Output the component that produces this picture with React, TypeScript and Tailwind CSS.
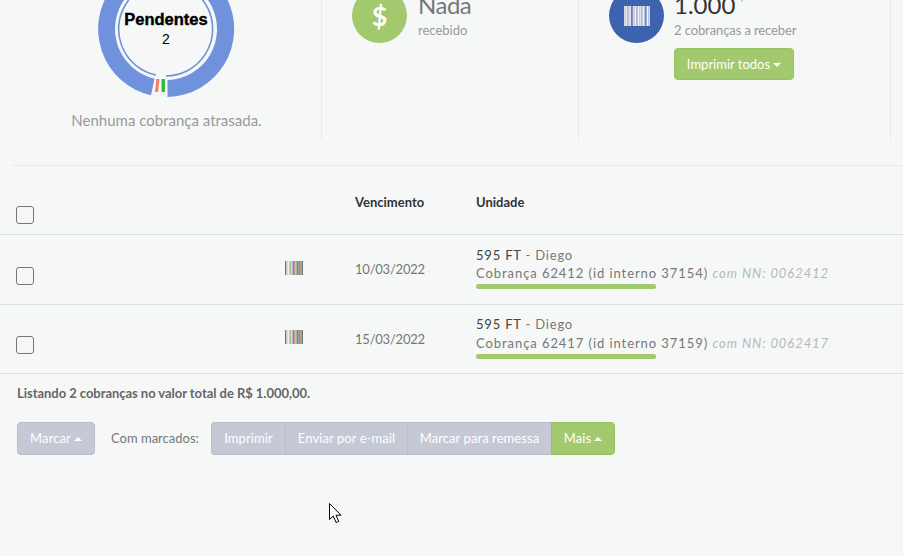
import React from "react";

const lato = "font-['Lato','Noto_Sans',sans-serif]";

function Barcode({ w, h, colors }: { w: number; h: number; colors: string[] }) {
  const bw = w / colors.length;
  return (
    <svg width={w} height={h} viewBox={`0 0 ${w} ${h}`} className="block">
      {colors.map((c, i) => (
        <rect key={i} x={i * bw} y={0} width={bw} height={h} fill={c} />
      ))}
    </svg>
  );
}

const small = ["#8e5aa8", "#d9dbe0", "#eceeea", "#a6b69a", "#e2dcd4", "#7d8d9a", "#c49aa0", "#a8b4a8", "#6f8290", "#7f8f9c", "#e09a4a", "#4f78a8"];
const big = ["#d8dce8", "#eef0f4", "#c6cbdc", "#f4f6f8", "#8e72b8", "#cfd4e2", "#f4f6f8", "#b8c4dc", "#f4f6f8", "#dfe4ee", "#c8d0e0", "#f4f6f8", "#6a8ad0", "#f0f2f6", "#d5dae6"];

function Donut() {
  return (
    <svg width={140} height={140} viewBox="0 0 140 140" className="mr-[1px] block">
      <path d="M 71.5 138 A 68 68 0 1 0 55 136.3 L 58.5 119.7 A 51 51 0 1 1 71.5 121 Z" fill="#7091dc" />
      <path d="M 70 117 A 47 47 0 1 0 60 116" fill="none" stroke="#7091dc" strokeWidth={1.6} />
      <polygon points="60.5,120 63.5,120 62,133 59,133" fill="#f47b5c" />
      <polygon points="65.5,120 69,120 69,133 65.5,133" fill="#2fbe3c" />
      <text x={70} y={66} textAnchor="middle" fontFamily="'Liberation Sans', Arial, sans-serif" fontWeight={700} fontSize={16.5} fill="#000" stroke="#000" strokeWidth={0.4}>
        Pendentes
      </text>
      <text x={70} y={85} textAnchor="middle" fontFamily="'Liberation Sans', Arial, sans-serif" fontSize={14} fill="#000">
        2
      </text>
    </svg>
  );
}

function Caret({ up = false }: { up?: boolean }) {
  return (
    <svg width={8} height={4} viewBox="0 0 8 4" className="ml-[3px] inline-block">
      <polygon points={up ? "0,4 8,4 4,0" : "0,0 8,0 4,4"} fill="#fff" />
    </svg>
  );
}

function Check() {
  return <div className="h-[18px] w-[18px] rounded-[3px] border border-[#777]" />;
}

function Row({ date, cob, id, nn, h, top, check, code, gap }: { date: string; cob: string; id: string; nn: string; h: string; top: string; check: string; code: string; gap: string }) {
  return (
    <div className={`grid grid-cols-[285px_70px_121px_1fr] border-b border-[#dcdfdf] ${h}`}>
      <div className={`pl-4 ${check}`}>
        <Check />
      </div>
      <div className={code}>
        <Barcode w={18} h={14} colors={small} />
      </div>
      <div className="flex items-center pt-[1px] text-[13px] tracking-[-0.22px] text-[#777]">{date}</div>
      <div className={top}>
        <div className="text-[13px] leading-[18px] tracking-[0.8px] text-[#777]">
          <span className="text-[#444]">595 FT</span> - Diego
        </div>
        <div className={`${gap} text-[13px] leading-[18px] tracking-[0.93px] whitespace-nowrap text-[#777]`}>
          Cobrança {cob} (id interno {id}) <em className="text-[#b5b8bb]">com NN: {nn}</em>
        </div>
        <div className="mt-[2px] h-[5px] w-[180px] rounded-[3px] bg-[#a2c96d]" />
      </div>
    </div>
  );
}

export default function App() {
  return (
    <div className={`${lato} relative h-[556px] w-[903px] overflow-hidden bg-[#f6f8f8]`}>
      {/* summary */}
      <div className="-mt-[41px] ml-3 flex h-[181px]">
        <div className="flex w-[310px] flex-col items-center border-r border-[#e8eaea]">
          <Donut />
          <div className="mt-[11px] text-[15px] leading-5 text-[#999]">Nenhuma cobrança atrasada.</div>
        </div>
        <div className="flex w-[257px] gap-[11px] border-r border-[#e8eaea] pl-[30px] pt-[29px]">
          <div className="flex h-[55px] w-[55px] items-center justify-center rounded-full bg-[#a2c96d] text-[27px] font-bold leading-none text-white">$</div>
          <div>
            <div className="h-[30px] text-[24px] leading-[34px] tracking-[-0.5px] text-[#777]">Nada</div>
            <div className="mt-[3px] text-[13px] leading-[18px] text-[#999]">recebido</div>
          </div>
        </div>
        <div className="flex w-[312px] gap-[10px] border-r border-[#e8eaea] pl-[30px] pt-[29px]">
          <div className="flex h-[55px] w-[55px] items-center justify-center rounded-full bg-[#3b63ae]">
            <Barcode w={26} h={20} colors={big} />
          </div>
          <div>
            <div className="h-[30px] text-[24px] leading-[34px] text-[#333]">
              1.000<sup className="ml-[5px] align-[8px] text-[13px] text-[#777]">,00</sup>
            </div>
            <div className="mt-[3px] text-[13px] leading-[18px] tracking-[-0.1px] text-[#999]">2 cobranças a receber</div>
            <button className="mt-[9px] flex h-[32px] w-[120px] items-center justify-center rounded-[4px] border border-[#98c262] bg-[#a2c96d] pt-[1px] text-[13px] text-white">
              Imprimir todos
              <Caret />
            </button>
          </div>
        </div>
      </div>

      <div className="ml-3 mt-[25px] border-t border-[#e8eaea]" />

      {/* header */}
      <div className="grid h-[69px] grid-cols-[285px_70px_121px_1fr] border-b border-[#dcdfdf]">
        <div className="pl-4 pt-[40px]">
          <Check />
        </div>
        <div />
        <div className="pt-[27px] text-[13px] font-bold leading-[18px] text-[#333]">Vencimento</div>
        <div className="pt-[27px] text-[13px] font-bold leading-[18px] text-[#333]">Unidade</div>
      </div>

      <Row date="10/03/2022" cob="62412" id="37154" nn="0062412" h="h-[70px]" top="pt-[11px]" check="pt-[32px]" code="pt-[26px]" gap="" />
      <Row date="15/03/2022" cob="62417" id="37159" nn="0062417" h="h-[69px]" top="pt-[10px]" check="pt-[31px]" code="pt-[25px]" gap="mt-[1px]" />

      <div className="ml-[17px] mt-[10px] text-[13px] font-bold leading-[18px] tracking-[-0.04px] text-[#666]">Listando 2 cobranças no valor total de R$ 1.000,00.</div>

      {/* actions */}
      <div className="ml-[17px] mt-[20px] flex h-[33px] items-center text-[13px]">
        <button className="flex h-[33px] w-[78px] items-center justify-center rounded-[4px] border border-[#b8bccb] bg-[#c5c8d5] tracking-[0.1px] text-white">
          Marcar
          <Caret up />
        </button>
        <span className="ml-4 w-[100px] text-[#777]">Com marcados:</span>
        <div className="flex h-[33px] tracking-[0.08px]">
          <button className="w-[75px] rounded-l-[3px] border border-[#b8bccb] bg-[#c5c8d5] text-white">Imprimir</button>
          <button className="-ml-px w-[123px] border border-[#b8bccb] bg-[#c5c8d5] text-white">Enviar por e-mail</button>
          <button className="-ml-px w-[145px] border border-[#b8bccb] bg-[#c5c8d5] text-white">Marcar para remessa</button>
          <button className="-ml-px flex w-[64px] items-center justify-center rounded-r-[4px] border border-[#98c262] bg-[#a2c96d] text-white">
            Mais
            <Caret up />
          </button>
        </div>
      </div>

      {/* mouse pointer */}
      <svg width={14} height={21} viewBox="0 0 14 21" className="absolute left-[329px] top-[503px]">
        <path d="M0.5 0.5 V16.5 L4.3 13 L7 19.5 L9.7 18.4 L7 12.2 H12 Z" fill="#fff" stroke="#000" strokeWidth={1} strokeLinejoin="miter" />
      </svg>
    </div>
  );
}
